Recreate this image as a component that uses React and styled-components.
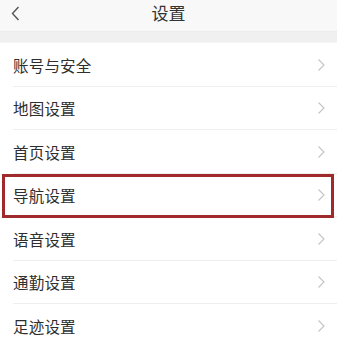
import React from 'react'
import styled, { createGlobalStyle } from 'styled-components'

const GlobalStyle = createGlobalStyle`
  html, body {
    margin: 0;
    padding: 0;
    background: #f2f2f2;
  }
  body {
    font-family: "Noto Sans CJK SC", "Noto Sans", sans-serif;
    -webkit-font-smoothing: antialiased;
  }
`

const items = [
  '账号与安全',
  '地图设置',
  '首页设置',
  '导航设置',
  '语音设置',
  '通勤设置',
  '足迹设置',
]

const Page = styled.div`
  width: 337px;
  height: 345px;
  overflow: hidden;
  background: #f2f2f2;
`

const Header = styled.div`
  height: 31px;
  display: grid;
  grid-template-columns: 40px 1fr 40px;
  align-items: center;
  background: #f8f8f8;
  border-bottom: 1px solid #ececec;
`

const BackButton = styled.div`
  display: flex;
  align-items: center;
  padding: 0 0 5px 10px;
  height: 100%;
  box-sizing: border-box;
`

const Title = styled.div`
  text-align: center;
  font-size: 17px;
  color: #333;
  line-height: 1;
  padding-bottom: 6px;
`

const Spacer = styled.div`
  height: 10px;
  background: #f0f0f0;
  border-bottom: 1px solid #f4f4f4;
`

const List = styled.div`
  background: #fff;
`

const Row = styled.div`
  position: relative;
  height: 43.5px;
  display: flex;
  align-items: center;
  justify-content: space-between;
  padding: 0 11px 0 13px;
  box-sizing: border-box;
  &::before {
    content: '';
    position: absolute;
    left: 13px;
    right: 0;
    bottom: 0;
    height: 1px;
    background: #eeeeee;
  }
  ${(p) =>
    p.$highlight &&
    `
    &::after {
      content: '';
      position: absolute;
      left: 2px;
      right: 3px;
      top: 0.5px;
      bottom: -1px;
      border: 3px solid #a02a2b;
      z-index: 2;
    }
  `}
`

const Label = styled.span`
  font-size: 15.5px;
  color: #2e2e2e;
  letter-spacing: 0.2px;
`

const Chevron = () => (
  <svg width="9" height="14" viewBox="0 0 9 14">
    <path d="M1.5 1.5 L7 7 L1.5 12.5" fill="none" stroke="#c4c4c4" strokeWidth="1.1" />
  </svg>
)

const BackIcon = () => (
  <svg width="11" height="15" viewBox="0 0 11 15">
    <path d="M8.5 1 L2.5 7.5 L8.5 14" fill="none" stroke="#555" strokeWidth="1.4" />
  </svg>
)

export default function App() {
  return (
    <Page>
      <GlobalStyle />
      <Header>
        <BackButton>
          <BackIcon />
        </BackButton>
        <Title>设置</Title>
        <div />
      </Header>
      <Spacer />
      <List>
        {items.map((item) => (
          <Row key={item} $highlight={item === '导航设置'}>
            <Label>{item}</Label>
            <Chevron />
          </Row>
        ))}
      </List>
    </Page>
  )
}
